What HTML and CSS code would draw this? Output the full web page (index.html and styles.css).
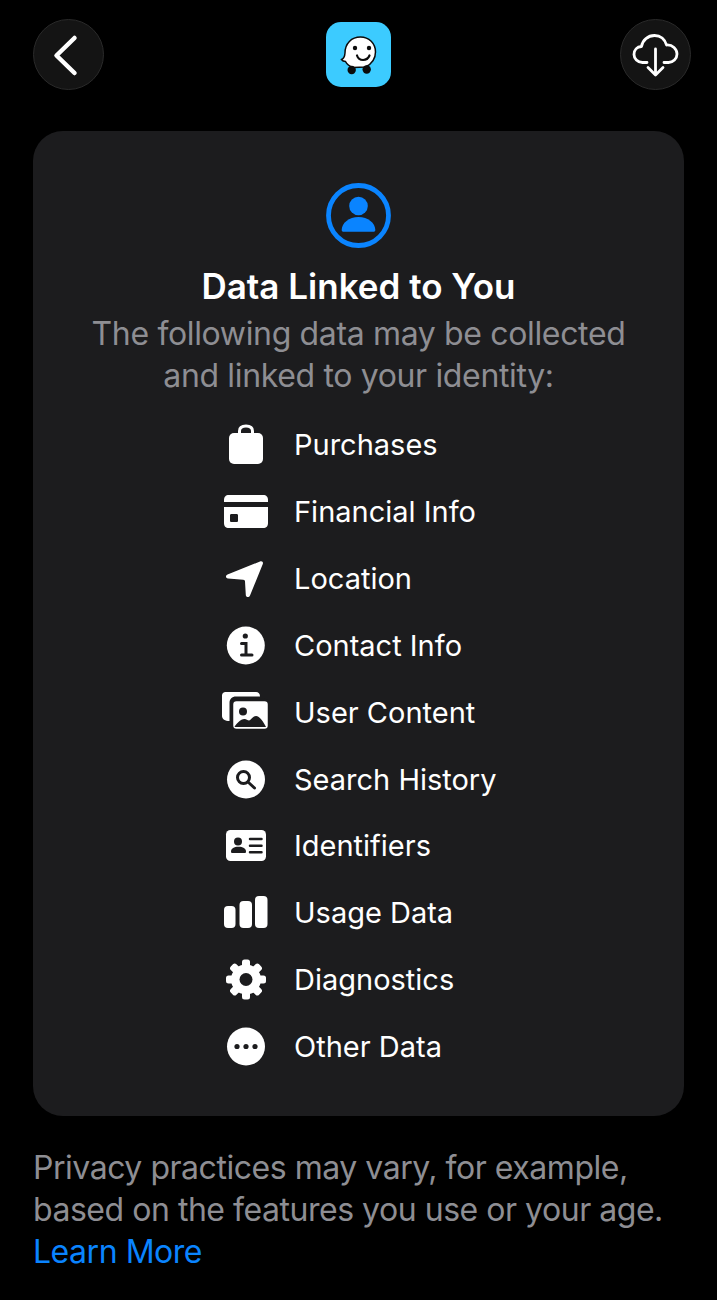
FILE: index.html
```html
<!DOCTYPE html>
<html lang="en">
<head>
<meta charset="utf-8">
<title>Data Linked to You</title>
<link rel="stylesheet" href="styles.css">
</head>
<body>
<header class="top">
  <button class="round" aria-label="Back">
    <svg width="71" height="71" viewBox="0 0 71 71"><path class="line thick" d="M41.500 19 L23.500 36.500 L41.500 54"/></svg>
  </button>
  <div class="logo">
    <svg width="65" height="65" viewBox="0 0 65 65">
      <path class="ghost" d="M34.500 15C43 15 49.500 21.500 49.500 30C49.500 37 45.500 42 39.500 45L27 45.500C23 44 20.500 41.500 19.500 39.500C18 39.500 16.500 39 15.500 37.500C18 36.500 18.800 34 19 31C19 21.500 25.500 15 34.500 15Z"/>
      <circle cx="29" cy="26" r="2.200"/>
      <circle cx="43" cy="26" r="2.200"/>
      <path class="smile" d="M31 33.500C33 39.500 41 39.500 43.500 33.500"/>
      <circle cx="25.700" cy="48" r="4.200"/>
      <circle cx="40.700" cy="47.500" r="4.200"/>
    </svg>
  </div>
  <button class="round" aria-label="Download">
    <svg width="71" height="71" viewBox="0 0 71 71">
      <path class="line" d="M27 43.500H22.500C17.500 43.500 14 39.500 14 35.500C14 31 17 27.800 21.500 27.500C22.500 21 28 16.500 34.500 16.500C40.500 16.500 45 20.500 46.500 26C52.500 25.500 57 30 57 35C57 39.800 53 43.500 48.500 43.500H44"/>
      <path class="line" d="M35.500 30V55.500M28 48.500L35.500 56L43 48.500"/>
    </svg>
  </button>
</header>

<main class="card">
  <svg class="person" width="65" height="65" viewBox="0 0 65 65">
    <circle class="ring" cx="32.500" cy="32.500" r="30"/>
    <circle class="blue" cx="32.500" cy="23" r="9.300"/>
    <path class="blue" d="M15.700 47C15.700 40 23 34 32.500 34C42 34 49.300 40 49.300 47C49.300 48 48.800 48.700 47.800 48.700H17.200C16.200 48.700 15.700 48 15.700 47Z"/>
  </svg>
  <h1 class="title">Data Linked to You</h1>
  <p class="sub">The following data may be collected<br>and linked to your identity:</p>
  <ul class="list">
    <li class="row">
      <svg class="ico" viewBox="0 0 48 48"><path class="stroke" d="M17.500 13V10C17.500 6.800 20 5 24 5C28 5 30.500 6.800 30.500 10V13"/><rect class="w" x="7" y="12" width="34" height="31" rx="5"/></svg>
      <span class="label">Purchases</span>
    </li>
    <li class="row">
      <svg class="ico" viewBox="0 0 48 48"><path class="w" d="M2 12C2 9 3.500 7 7 7H41C44.500 7 46 9 46 12V14H2Z"/><path class="w" fill-rule="evenodd" d="M2 19H46V35C46 38 44.500 40 41 40H7C3.500 40 2 38 2 35ZM9.500 26C8.500 26 8 26.500 8 27.500V32.500C8 33.500 8.500 34 9.500 34H14.500C15.500 34 16 33.500 16 32.500V27.500C16 26.500 15.500 26 14.500 26Z"/></svg>
      <span class="label">Financial Info</span>
    </li>
    <li class="row">
      <svg class="ico" viewBox="0 0 48 48"><path class="w" transform="translate(-1.500 1)" d="M39.500 5.500C41.500 4.700 43 6 42.300 8L29.500 39.500C28.500 41.800 25.500 41.500 25.300 39L24.500 25.500C24.500 24.300 23.800 23.800 22.800 23.700L7.500 22.500C5 22.300 4.700 19.500 7 18.500Z"/></svg>
      <span class="label">Location</span>
    </li>
    <li class="row">
      <svg class="ico" viewBox="0 0 48 48"><circle class="w" cx="23.800" cy="23.500" r="19"/><circle class="d" cx="23.300" cy="14" r="2.600"/><path class="cut" d="M19.500 21.500H24V33M19.500 33H30"/></svg>
      <span class="label">Contact Info</span>
    </li>
    <li class="row">
      <svg class="ico" viewBox="0 0 48 48">
        <path class="w" d="M3.500 3H34C36.500 3 38 4.500 38 7.500H14C10 7.500 7.500 10 7.500 14V32C3 32 0 30 0 27V6.500C0 4.500 1.500 3 3.500 3Z"/>
        <rect class="box" x="10" y="11" width="37" height="30" rx="4.500"/>
        <circle class="d" cx="21" cy="22.500" r="4"/>
        <path class="d" d="M12.500 38C14 35 18.500 30 22.500 30C24.500 30 25.500 31.500 27 31.500C29 31.500 30.500 27 34 27C37.500 27 42 33.500 44 38Z"/>
      </svg>
      <span class="label">User Content</span>
    </li>
    <li class="row">
      <svg class="ico" viewBox="0 0 48 48"><circle class="w" cx="24" cy="23.500" r="19"/><circle class="cut" cx="21.500" cy="21.500" r="6"/><path class="cut" d="M26 26L32.500 32"/></svg>
      <span class="label">Search History</span>
    </li>
    <li class="row">
      <svg class="ico" viewBox="0 0 48 48"><rect class="w" x="4" y="8" width="40" height="31" rx="4.500"/><circle class="d" cx="16" cy="19.500" r="4"/><path class="d" d="M9 29.500C9 26.500 12 24.800 16.500 24.800C21 24.800 24 26.500 24 29.500C24 30.500 23.500 31 22.500 31H10.500C9.500 31 9 30.500 9 29.500Z"/><path class="cut thin" d="M28 17H39.500M28 23.800H39.500M28 30.200H39.500"/></svg>
      <span class="label">Identifiers</span>
    </li>
    <li class="row">
      <svg class="ico" viewBox="0 0 48 48"><rect class="w" x="2" y="17" width="11.500" height="22" rx="4"/><rect class="w" x="17.500" y="12" width="12.500" height="27" rx="4"/><rect class="w" x="33" y="7" width="12.500" height="32" rx="4"/></svg>
      <span class="label">Usage Data</span>
    </li>
    <li class="row">
      <svg class="ico" viewBox="0 0 48 48"><g class="w"><circle cx="24" cy="23.500" r="15"/><rect x="20" y="3.500" width="8" height="40" rx="2.500"/><rect x="20" y="3.500" width="8" height="40" rx="2.500" transform="rotate(45 24 23.500)"/><rect x="20" y="3.500" width="8" height="40" rx="2.500" transform="rotate(90 24 23.500)"/><rect x="20" y="3.500" width="8" height="40" rx="2.500" transform="rotate(135 24 23.500)"/></g><circle class="d" cx="24" cy="23.500" r="6.500"/></svg>
      <span class="label">Diagnostics</span>
    </li>
    <li class="row">
      <svg class="ico" viewBox="0 0 48 48"><circle class="w" cx="24" cy="23.500" r="19"/><circle class="d" cx="15" cy="23.500" r="2.600"/><circle class="d" cx="24" cy="23.500" r="2.600"/><circle class="d" cx="33" cy="23.500" r="2.600"/></svg>
      <span class="label">Other Data</span>
    </li>
  </ul>
</main>

<footer class="foot">
  <p>Privacy practices may vary, for example,<br>based on the features you use or your age.<br><a class="link" href="#">Learn More</a></p>
</footer>
</body>
</html>
```

FILE: styles.css
```css
* { box-sizing: border-box; }
html, body { margin: 0; padding: 0; }
body {
  width: 717px;
  height: 1300px;
  overflow: hidden;
  background: #000;
  color: #fff;
  font-family: Inter, "Liberation Sans", sans-serif;
  padding: 19px 33px 0;
}
.top {
  display: flex;
  justify-content: space-between;
  align-items: flex-start;
  height: 112px;
}
.round {
  width: 71px;
  height: 71px;
  padding: 0;
  border: 1.500px solid #2a2a2a;
  border-radius: 50%;
  background: #141414;
  display: block;
  overflow: hidden;
}
.round:last-child { margin-right: -7px; }
.round svg { display: block; margin: -1.500px; }
.line { fill: none; stroke: #fff; stroke-width: 2.800; stroke-linecap: round; stroke-linejoin: round; }
.thick { stroke-width: 4.500; }
.logo {
  width: 65px;
  height: 65px;
  margin-top: 3px;
  margin-left: -7px;
  border-radius: 15px;
  background: #3ccbff;
  overflow: hidden;
}
.logo svg { display: block; }
.logo circle { fill: #0b0b0b; }
.ghost { fill: #fff; stroke: #0b0b0b; stroke-width: 1.500; }
.smile { fill: none; stroke: #0b0b0b; stroke-width: 2.200; stroke-linecap: round; }
.card {
  width: 651px;
  height: 985px;
  border-radius: 30px;
  background: #1c1c1e;
  padding-top: 52px;
  display: flex;
  flex-direction: column;
  align-items: center;
}
.person { display: block; }
.ring { fill: none; stroke: #0a84ff; stroke-width: 4.800; }
.blue { fill: #0a84ff; }
.title {
  margin: 16px 0 0;
  font-size: 35px;
  line-height: 44px;
  font-weight: 600;
  letter-spacing: 0;
  white-space: nowrap;
}
.sub {
  margin: 5px 0 0;
  font-size: 32px;
  line-height: 42px;
  font-weight: 400;
  color: #8e8e93;
  text-align: center;
  letter-spacing: -0.350px;
  white-space: nowrap;
}
.list {
  list-style: none;
  margin: 15px 0 0;
  padding: 0;
  width: 273px;
}
.row {
  height: 66.850px;
  display: flex;
  align-items: center;
  gap: 24px;
}
.ico { width: 48px; height: 48px; flex: none; display: block; }
.w { fill: #fff; }
.d { fill: #1c1c1e; }
.stroke { fill: none; stroke: #fff; stroke-width: 3; }
.cut { fill: none; stroke: #1c1c1e; stroke-width: 3; stroke-linecap: round; }
.thin { stroke-width: 2.500; }
.box { fill: #fff; stroke: #1c1c1e; stroke-width: 2.500; }
.label {
  font-size: 29px;
  line-height: 40px;
  white-space: nowrap;
  letter-spacing: 0;
}
.foot { margin-top: 31px; }
.foot p {
  margin: 0;
  font-size: 32px;
  line-height: 42px;
  color: #8e8e93;
  white-space: nowrap;
  letter-spacing: -0.470px;
}
.link { color: #0a84ff; text-decoration: none; }
```
